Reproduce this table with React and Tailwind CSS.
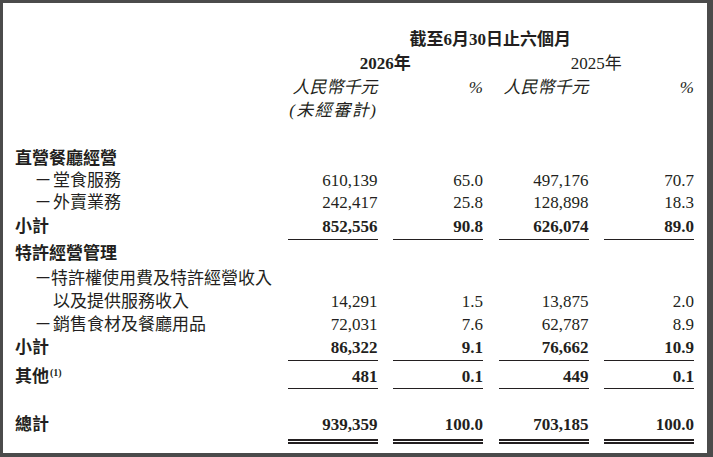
import React from "react";

// revenue breakdown table, six months ended 30 June
const ink = "#231f20";

function Cells({ values, bold }) {
  return values.map((v, i) => (
    <div key={i} className={`text-right ${bold ? "font-bold" : ""}`}>
      {v}
    </div>
  ));
}

function Row({ label, values = ["", "", "", ""], bold, head, className = "", h = "h-[22px] leading-[22px]" }) {
  return (
    <div className={`grid grid-cols-[257px_90px_90px_90px_90px] gap-x-[15.5px] ${h} ${className}`}>
      <div className={`whitespace-nowrap ${head ? "font-bold" : ""}`}>{label}</div>
      <Cells values={values} bold={bold} />
    </div>
  );
}

function Item({ children }) {
  return (
    <span className="pl-[20px] flex">
      <span className="w-[18px] text-[14px] pl-[1px]">一</span>
      <span>{children}</span>
    </span>
  );
}

function Rule() {
  return (
    <div className="grid grid-cols-[257px_90px_90px_90px_90px] gap-x-[15.5px]">
      <div />
      {[0, 1, 2, 3].map((i) => (
        <div key={i} className="h-[1px] bg-[#231f20]" />
      ))}
    </div>
  );
}

function DoubleRule() {
  return (
    <div className="grid grid-cols-[257px_90px_90px_90px_90px] gap-x-[15.5px]">
      <div />
      {[0, 1, 2, 3].map((i) => (
        <div key={i} className="flex flex-col gap-[1px]">
          <div className="h-[2px] bg-[#231f20]" />
          <div className="h-[2px] bg-[#231f20]" />
        </div>
      ))}
    </div>
  );
}

export default function App() {
  return (
    <div className="w-[713px] h-[457px] bg-[#4b4b4b] pt-[3px] pl-[3px] pr-[6px] pb-[4px]">
      <div
        className="h-full bg-white pl-[12px] pt-[25px] text-[17px] text-[#231f20] font-['Liberation_Serif','Noto_Sans_CJK_TC',serif]"
        style={{ color: ink }}
      >
        {/* column headings */}
        <div className="grid grid-cols-[257px_405.5px] gap-x-[15.5px] h-[24px] leading-[24px]">
          <div />
          <div className="text-center font-bold">截至6月30日止六個月</div>
        </div>
        <div className="grid grid-cols-[257px_195.5px_195.5px] gap-x-[15.5px] h-[24px] leading-[24px]">
          <div />
          <div className="text-center font-bold">2026年</div>
          <div className="text-center">2025年</div>
        </div>
        <Row h="h-[24px] leading-[24px]" values={[<i key="a">人民幣千元</i>, <i key="b">%</i>, <i key="c">人民幣千元</i>, <i key="d">%</i>]} />
        <Row
          h="h-[21px] leading-[21px]"
          values={[<i key="a" className="tracking-[1.5px]">(未經審計)</i>, "", "", ""]}
        />

        {/* direct restaurant operations */}
        <Row className="mt-[27px]" head label="直營餐廳經營" />
        <Row label={<Item>堂食服務</Item>} values={["610,139", "65.0", "497,176", "70.7"]} />
        <Row label={<Item>外賣業務</Item>} values={["242,417", "25.8", "128,898", "18.3"]} />
        <Row className="mt-[2px]" head bold label="小計" values={["852,556", "90.8", "626,074", "89.0"]} />
        <div className="mt-[1px]">
          <Rule />
        </div>

        {/* franchise management */}
        <Row className="mt-[3px]" head label="特許經營管理" />
        <Row className="mt-[2px]" h="h-[23px] leading-[23px]" label={<Item>特許權使用費及特許經營收入</Item>} />
        <Row
          h="h-[23px] leading-[23px]"
          label={<span className="pl-[38px]">以及提供服務收入</span>}
          values={["14,291", "1.5", "13,875", "2.0"]}
        />
        <Row h="h-[23px] leading-[23px]" label={<Item>銷售食材及餐廳用品</Item>} values={["72,031", "7.6", "62,787", "8.9"]} />
        <Row className="mt-[1px]" head bold label="小計" values={["86,322", "9.1", "76,662", "10.9"]} />
        <div className="mt-[1px]">
          <Rule />
        </div>

        {/* others */}
        <Row
          className="mt-[5px]"
          head
          bold
          label={
            <span>
              其他<span className="text-[10px] font-bold relative top-[-6px] ml-[1px]">(1)</span>
            </span>
          }
          values={["481", "0.1", "449", "0.1"]}
        />
        <Rule />

        {/* total */}
        <Row className="mt-[25px]" head bold label="總計" values={["939,359", "100.0", "703,185", "100.0"]} />
        <div className="mt-[3px]">
          <DoubleRule />
        </div>
      </div>
    </div>
  );
}
